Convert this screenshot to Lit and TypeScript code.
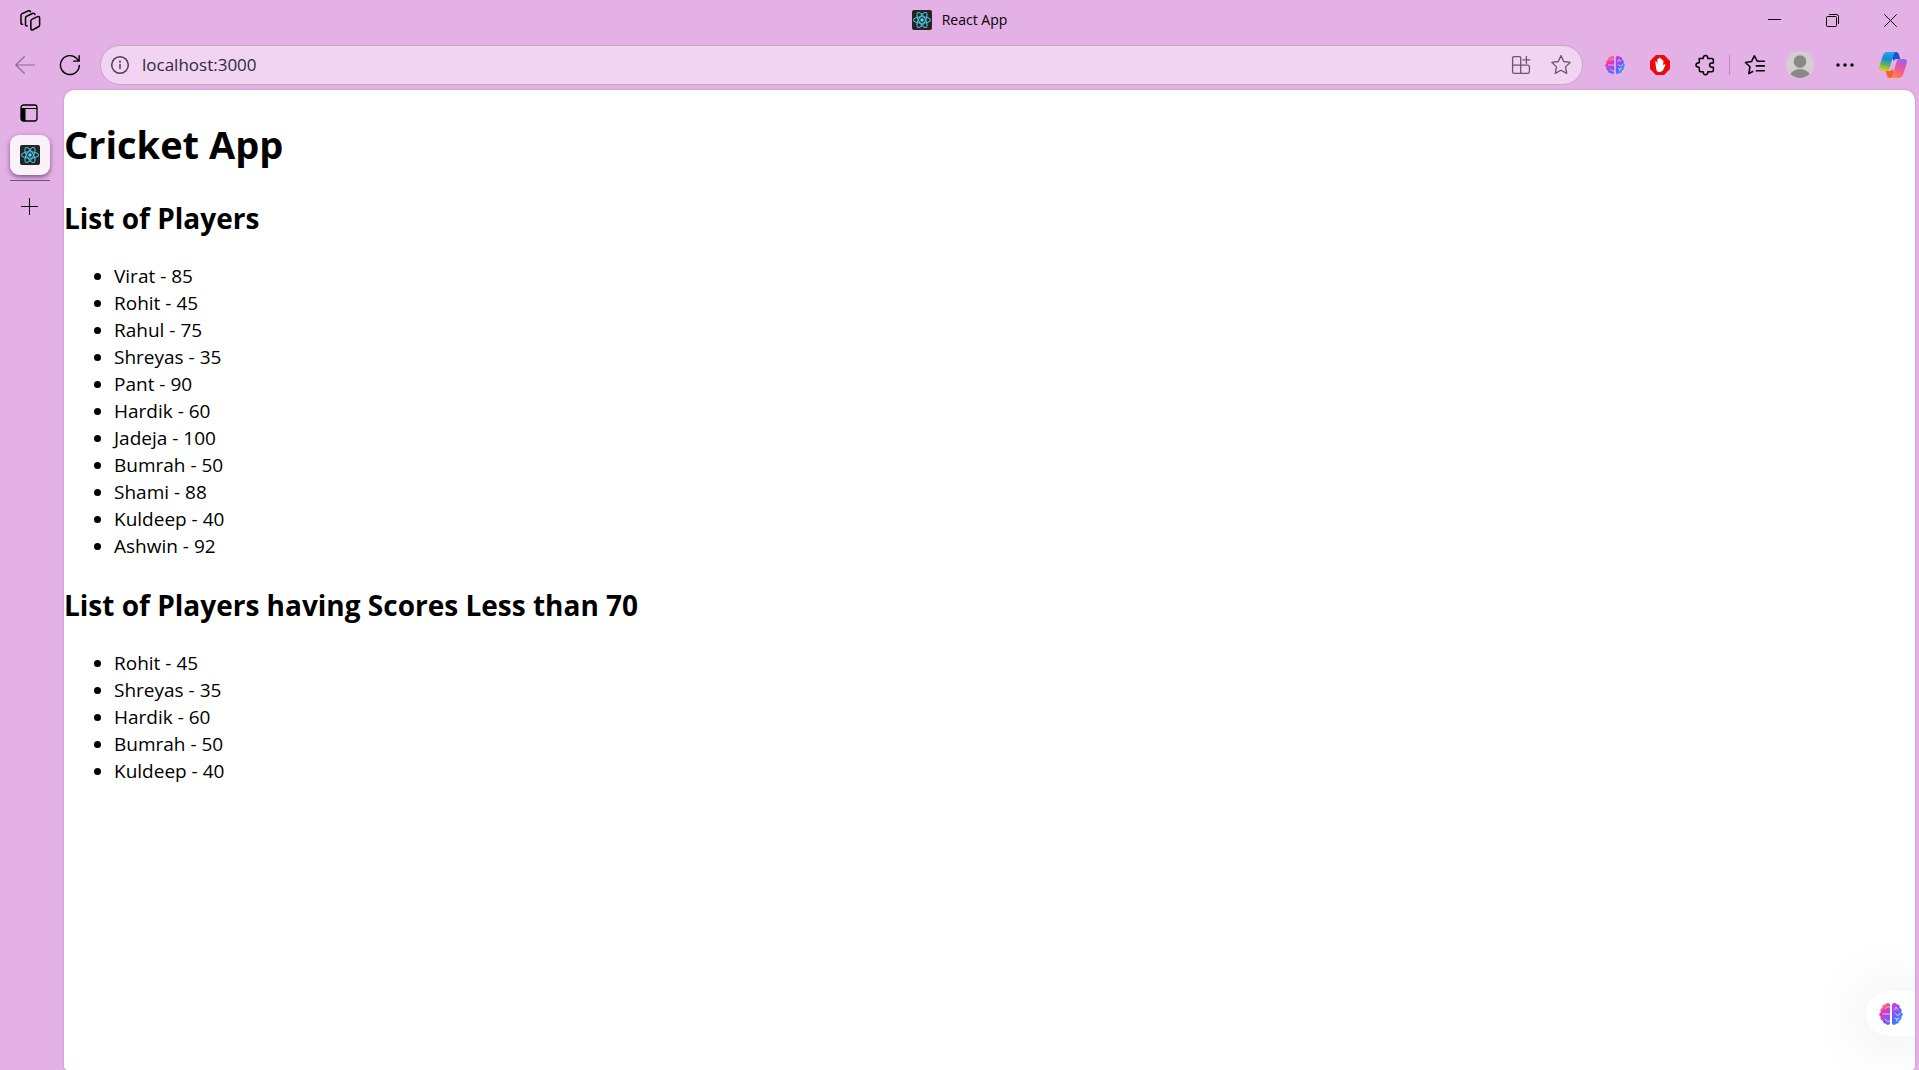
import { LitElement, html, css, svg } from "lit";
import { customElement, property } from "lit/decorators.js";

interface Player {
  name: string;
  score: number;
}

const players: Player[] = [
  { name: "Virat", score: 85 },
  { name: "Rohit", score: 45 },
  { name: "Rahul", score: 75 },
  { name: "Shreyas", score: 35 },
  { name: "Pant", score: 90 },
  { name: "Hardik", score: 60 },
  { name: "Jadeja", score: 100 },
  { name: "Bumrah", score: 50 },
  { name: "Shami", score: 88 },
  { name: "Kuldeep", score: 40 },
  { name: "Ashwin", score: 92 },
];

const line = (size: number, body: unknown, width = 1.4) => html`<svg
  width=${size} height=${size} viewBox="0 0 20 20" fill="none" stroke="currentColor"
  stroke-width=${width} stroke-linecap="round" stroke-linejoin="round" aria-hidden="true">${body}</svg>`;

const reactLogo = html`<svg width="20" height="20" viewBox="0 0 20 20" aria-hidden="true">
  <rect width="20" height="20" rx="2" fill="#242424" />
  <g fill="none" stroke="#4fc0dc" stroke-width="1.1">
    <ellipse cx="10" cy="10" rx="8.500" ry="3.300" />
    <ellipse cx="10" cy="10" rx="8.500" ry="3.300" transform="rotate(60 10 10)" />
    <ellipse cx="10" cy="10" rx="8.500" ry="3.300" transform="rotate(120 10 10)" />
  </g>
  <circle cx="10" cy="10" r="1.700" fill="#61dafb" />
</svg>`;

const brain = (size: number) => html`<svg width=${size} height=${size} viewBox="0 0 24 24" aria-hidden="true">
  <defs>
    <linearGradient id="bl" x1="0.3" y1="0" x2="0.7" y2="1">
      <stop offset="0.06" stop-color="#ff9a2e" /><stop offset="0.36" stop-color="#f02fc0" />
      <stop offset="0.8" stop-color="#7a5cf5" />
    </linearGradient>
    <linearGradient id="br" x1="0.2" y1="0" x2="0.8" y2="1">
      <stop offset="0.1" stop-color="#c43df0" /><stop offset="0.5" stop-color="#6c5cf6" />
      <stop offset="0.9" stop-color="#1fa0ff" />
    </linearGradient>
  </defs>
  <path fill="url(#bl)" d="M11 2.800C10.300.6 7.600.2 6.400 2.200 4 2 2.800 4 3.400 5.800 1.200 6.800.9 8.900 1.900 10.200-.3 11.200-.1 13.700 1.600 14.500 1 16.800 2 18.200 3.600 18.600 3.700 20.800 5.200 22 6.900 21.700 8.200 23.600 10.500 23.200 11 21.200Z" />
  <path fill="url(#br)" d="M13 2.800C13.700.6 16.400.2 17.600 2.200 20 2 21.200 4 20.600 5.800 22.800 6.800 23.100 8.900 22.100 10.200 24.300 11.200 24.100 13.700 22.400 14.500 23 16.800 22 18.200 20.400 18.600 20.300 20.800 18.800 22 17.100 21.700 15.800 23.600 13.500 23.200 13 21.200Z" />
  <g fill="none" stroke="#fff" stroke-opacity=".75" stroke-width=".9" stroke-linecap="round">
    <path d="M11 5H8.200L6.300 7M11 12H4M11 19.200H8.500L6 17" />
    <path d="M15.500 8l1.500-3 2 3M16 11.200l2 2h2l1-2M17.800 17v2M15.800 16l2 1 2-1" />
  </g>
</svg>`;

const icons = {
  workspaces: line(25, svg`
    <path d="M11.300 8.900l4.400-2q1.600-.6 1.600 1v5.600q0 1-.9 1.500l-4.400 2.400q-1.700.8-1.700-1v-6.100q0-1 1-1.400z" />
    <path d="M7.300 14.300q-1.300.2-1.300-1V8q0-1 .9-1.400l4.600-2.200q1.600-.6 2.100.8" />
    <path d="M3.600 13q-1.200.2-1.200-1V5.900q0-1 .9-1.400l4.700-2.100q1.400-.5 2 .5" />`, 1.2),
  back: line(20, svg`<path d="M19.500 10H.9M9.300 1.700L.8 10l8.500 8.300" />`, 1.2),
  reload: line(22, svg`<path d="M18.500 10.500a8.600 8.600 0 1 1-2.300-6.300L18 6.200M18.300 1.500v5h-5" />`, 1.3),
  info: line(20, svg`<circle cx="10" cy="10" r="8.300" /><path d="M10 9.500v4" /><circle cx="10" cy="6.600" r=".4" />`, 1.5),
  apps: line(20, svg`<path d="M9.700 10.200V2.800q0-1.200-1.200-1.200H3.200Q1.600 1.600 1.600 3.200v13.600q0 1.600 1.600 1.600h13.600q1.600 0 1.600-1.600v-5q0-1.600-1.600-1.600H1.600M9.700 10.200v8.200M15.400 1.500v6.800M12 4.900h6.800" />`, 1.3),
  star: line(22, svg`<path d="M10 1.500l2.500 5.300 5.900.8-4.300 4.100 1.100 5.900L10 14.800l-5.200 2.800 1.100-5.900L1.600 7.600l5.900-.8z" />`, 1.2),
  favorites: line(22, svg`<path d="M18.500 6.600h-6.300L9.400 1.600 6.800 6.900l-5.500.8 4.100 3.900-1 6.300 3.500-2M11.200 10.800h7.300M11.200 15.200h7.300" />`, 1.4),
  puzzle: line(22, svg`<path d="M4.800 4H8.300C8.400.4 12.500.4 12.600 4H16.200q1.400 0 1.400 1.400V8.200H16c-2.400.2-2.400 3.600 0 3.800h1.600v2.800q0 1.400-1.400 1.400H12.600C12.500 19.800 8.400 19.800 8.300 16.200H6.200q-1.400 0-1.400-1.400V12.200C.8 12 .8 8.200 4.800 8z" />`, 1.4),
  panel: html`<svg width="18" height="18" viewBox="0 0 18 18" aria-hidden="true">
    <rect x="1" y="1" width="16" height="16" rx="2.500" fill="none" stroke="#000" stroke-width="1.300" />
    <path d="M1 4.500h16" stroke="#000" /><path d="M1 4.500h4.500V17H3q-2 0-2-2z" />
  </svg>`,
  plus: html`<svg width="17" height="17" viewBox="0 0 17 17" stroke="#000" aria-hidden="true"><path d="M8.500 0v17M0 8.500h17" /></svg>`,
  minimize: html`<svg width="13" height="13" viewBox="0 0 13 13" aria-hidden="true"><path d="M0 5.500h13" stroke="#000" /></svg>`,
  restore: html`<svg width="13" height="13" viewBox="0 0 13 13" fill="none" stroke="#000" aria-hidden="true">
    <rect x=".5" y="2.500" width="10" height="10" rx="1" /><path d="M3 .5h7.500q2 0 2 2V10" /></svg>`,
  close: html`<svg width="13" height="13" viewBox="0 0 13 13" stroke="#000" aria-hidden="true"><path d="M.3.300l12.400 12.400M12.700.3L.3 12.700" /></svg>`,
  block: html`<svg width="20" height="20" viewBox="0 0 20 20" aria-hidden="true">
    <path d="M5.900 0h8.200L20 5.900v8.200L14.100 20H5.900L0 14.100V5.900z" fill="#e80c0c" />
    <path d="M5.300 6.600q.9-.6 1.300.3l.8 2V4.200q.7-1 1.400 0V3q.8-1 1.500 0v1q.8-.9 1.500.1v1.200q.8-.8 1.500.2V10.400l.9-.9q1-.5 1.200.4l-1.900 4.400q-1.100 3-3.800 2.800-2.800 0-3.500-2.900z" fill="#fff" />
  </svg>`,
  avatar: html`<svg width="28" height="28" viewBox="0 0 28 28" aria-hidden="true">
    <clipPath id="av"><circle cx="14" cy="14" r="13" /></clipPath>
    <circle cx="14" cy="14" r="14" fill="#d2d0ce" />
    <circle cx="14" cy="10.500" r="6.300" fill="#8a8886" />
    <ellipse cx="14" cy="27" rx="11" ry="9" fill="#8a8886" clip-path="url(#av)" />
  </svg>`,
  more: html`<svg width="18" height="4" viewBox="0 0 18 4" aria-hidden="true">
    <circle cx="2" cy="2" r="1.700" /><circle cx="9" cy="2" r="1.700" /><circle cx="16" cy="2" r="1.700" /></svg>`,
  copilot: html`<svg width="28" height="26" viewBox="0 0 28 26" aria-hidden="true">
    <defs>
      <linearGradient id="c1" x1="0.5" y1="0" x2="0.3" y2="1">
        <stop offset="0" stop-color="#1aa7f0" /><stop offset=".35" stop-color="#168bd8" />
        <stop offset=".65" stop-color="#4fb567" /><stop offset="1" stop-color="#f5c90a" />
      </linearGradient>
      <linearGradient id="c2" x1="0.7" y1="0" x2="0.3" y2="1">
        <stop offset="0" stop-color="#a45cf0" /><stop offset=".5" stop-color="#f0559a" />
        <stop offset="1" stop-color="#ff8a3d" />
      </linearGradient>
    </defs>
    <path d="M14 0h2.800q2.300 0 3 2.300L21.300 7h-4q-2 0-2.600 2L12 4z" fill="#1a4fd0" />
    <path d="M14 26h-3q-2.300 0-3-2.300L6.700 19h4q2 0 2.700-2l2.600 5z" fill="#f4602c" />
    <path d="M8.500 0H17q-1.700.3-2.400 2.500l-4 13.500q-.8 3-3.600 3H3.500Q-.8 19 .3 14.500L3.700 4Q5 0 8.500 0z" fill="url(#c1)" />
    <path d="M19.500 26H11q1.700-.3 2.400-2.500l4-13.500q.8-3 3.600-3h3.500q4.300 0 3.200 4.500L24.300 22q-1.300 4-4.800 4z" fill="url(#c2)" />
  </svg>`,
};

@customElement("player-list")
class PlayerList extends LitElement {
  @property() heading = "";
  @property({ attribute: false }) players: Player[] = [];

  static styles = css`
    :host { display: block; }
    .heading { margin: 25px 0; font-size: 28px; line-height: 40px; font-weight: 700; }
    .list { margin: 0; padding: 0 0 0 50px; font-size: 19px; line-height: 27px; }
  `;

  render() {
    return html`
      <h2 class="heading">${this.heading}</h2>
      <ul class="list">${this.players.map((p) => html`<li>${p.name} - ${p.score}</li>`)}</ul>
    `;
  }
}

@customElement("app-root")
class AppRoot extends LitElement {
  static styles = css`
    :host {
      display: flex;
      flex-direction: column;
      min-height: 100vh;
      background: #e4b1e6;
      color: #000;
      font-family: "Segoe UI", "Open Sans", "Noto Sans", sans-serif;
    }
    button {
      display: flex;
      align-items: center;
      justify-content: center;
      flex: none;
      padding: 0;
      border: 0;
      background: none;
      color: inherit;
      font: inherit;
    }
    svg { display: block; flex: none; }
    .titlebar { display: grid; grid-template-columns: 1fr auto 1fr; align-items: center; height: 40px; }
    .workspaces { width: 25px; height: 40px; margin-left: 18px; }
    .title { display: flex; align-items: center; gap: 10px; font-size: 14px; line-height: 20px; }
    .window { display: flex; justify-content: flex-end; }
    .window button { width: 58px; height: 38px; }
    .toolbar { display: flex; align-items: center; height: 50px; padding-left: 2px; }
    .tool { width: 45px; height: 40px; }
    .muted { color: #8f6c92; }
    .address {
      display: flex;
      align-items: center;
      flex: 1;
      box-sizing: border-box;
      height: 40px;
      margin: 0 9px 0 8px;
      padding: 0 1px 0 9px;
      border: 1px solid #c6a5c9;
      border-radius: 20px;
      background: #f1d4f2;
      color: #6b566d;
    }
    .address button { width: 40px; height: 36px; }
    .address .info { width: 20px; color: #4d3e4e; }
    .url {
      flex: 1;
      min-width: 0;
      margin: 0 0 0 12px;
      padding: 0;
      border: 0;
      outline: 0;
      background: none;
      color: #33283a;
      font: inherit;
      font-size: 17px;
      line-height: 24px;
    }
    .divider { width: 1px; height: 20px; margin: 0 2px; background: #b58cba; }
    .copilot { width: 52px; height: 40px; }
    .body { display: flex; flex: 1; }
    .sidebar { display: flex; flex-direction: column; align-items: center; width: 60px; margin-right: 4px; }
    .sidebar .panel { width: 40px; height: 45px; margin-right: 2px; }
    .tab {
      width: 40px;
      height: 40px;
      border-radius: 9px;
      background: #faf2fb;
      box-shadow: 0 2px 5px rgba(40, 10, 45, 0.55);
    }
    .sidebar .tab { background: #faf2fb; }
    .rule { width: 40px; height: 1px; margin: 5px 0; background: #6f5672; }
    .sidebar .plus { width: 40px; height: 40px; margin-right: 1px; }
    .page {
      position: relative;
      flex: 1;
      margin-right: 4px;
      border-radius: 10px 10px 4px 4px;
      background: #fff;
      box-shadow: 0 0 2px rgba(90, 30, 100, 0.35);
      overflow: hidden;
    }
    .page-title { margin: 28px 0 27px; font-size: 38px; line-height: 53px; font-weight: 700; }
    .assistant {
      position: absolute;
      right: 0;
      bottom: 34px;
      width: 49px;
      height: 45px;
      border-radius: 23px 0 0 23px;
      background: #fff;
      box-shadow: 0 2px 60px rgba(0, 0, 0, 0.13);
    }
  `;

  render() {
    return html`
      <header class="titlebar">
        <button class="workspaces" aria-label="Workspaces">${icons.workspaces}</button>
        <div class="title">${reactLogo}<span>React App</span></div>
        <div class="window">
          <button aria-label="Minimize">${icons.minimize}</button>
          <button aria-label="Restore">${icons.restore}</button>
          <button aria-label="Close">${icons.close}</button>
        </div>
      </header>
      <nav class="toolbar">
        <button class="tool muted" aria-label="Back">${icons.back}</button>
        <button class="tool" aria-label="Refresh">${icons.reload}</button>
        <div class="address">
          <button class="info" aria-label="Site information">${icons.info}</button>
          <input class="url" type="text" aria-label="Address" value="localhost:3000" />
          <button aria-label="App available">${icons.apps}</button>
          <button aria-label="Add to favorites">${icons.star}</button>
        </div>
        <button class="tool" aria-label="Assistant extension">${brain(20)}</button>
        <button class="tool" aria-label="Content blocker">${icons.block}</button>
        <button class="tool" aria-label="Extensions">${icons.puzzle}</button>
        <span class="divider"></span>
        <button class="tool" aria-label="Favorites">${icons.favorites}</button>
        <button class="tool" aria-label="Profile">${icons.avatar}</button>
        <button class="tool" aria-label="More">${icons.more}</button>
        <button class="copilot" aria-label="Copilot">${icons.copilot}</button>
      </nav>
      <div class="body">
        <aside class="sidebar">
          <button class="panel" aria-label="Tab actions">${icons.panel}</button>
          <button class="tab" aria-label="Current tab">${reactLogo}</button>
          <div class="rule"></div>
          <button class="plus" aria-label="New tab">${icons.plus}</button>
        </aside>
        <main class="page">
          <h1 class="page-title">Cricket App</h1>
          <player-list heading="List of Players" .players=${players}></player-list>
          <player-list
            heading="List of Players having Scores Less than 70"
            .players=${players.filter((p) => p.score < 70)}
          ></player-list>
          <button class="assistant" aria-label="Open assistant">${brain(24)}</button>
        </main>
      </div>
    `;
  }
}
